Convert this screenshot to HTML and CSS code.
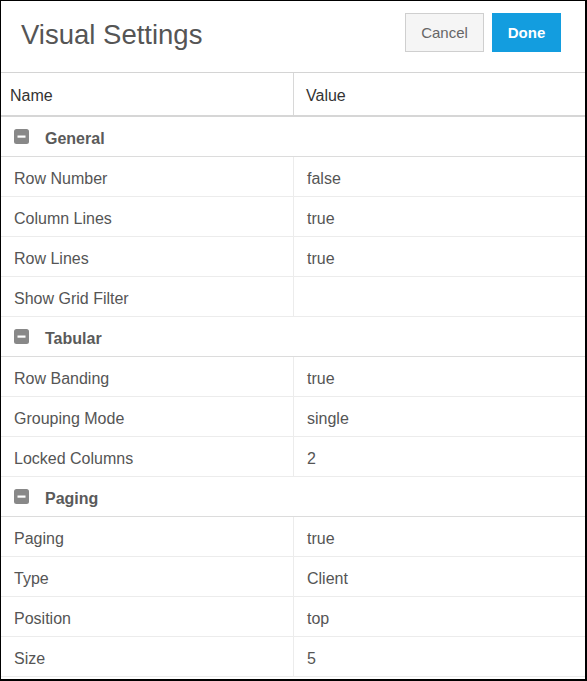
FILE: index.html
```html
<!DOCTYPE html>
<html>
<head>
<meta charset="utf-8">
<link rel="stylesheet" href="styles.css">
</head>
<body>
<div class="window">
  <div class="header">
    <div class="title">Visual Settings</div>
    <div class="actions">
      <button class="btn btn-cancel">Cancel</button>
      <button class="btn btn-done">Done</button>
    </div>
  </div>
  <div class="grid">
    <div class="row head">
      <div class="cell name">Name</div>
      <div class="cell value">Value</div>
    </div>

    <div class="row group">
      <svg class="toggle" width="15" height="15" viewBox="0 0 15 15"><rect x="0" y="0" width="15" height="15" rx="2.5" fill="#888"/><rect x="3.5" y="6.5" width="8" height="2.2" fill="#fff"/></svg>
      <span>General</span>
    </div>
    <div class="row"><div class="cell name">Row Number</div><div class="cell value">false</div></div>
    <div class="row"><div class="cell name">Column Lines</div><div class="cell value">true</div></div>
    <div class="row"><div class="cell name">Row Lines</div><div class="cell value">true</div></div>
    <div class="row"><div class="cell name">Show Grid Filter</div><div class="cell value"></div></div>

    <div class="row group">
      <svg class="toggle" width="15" height="15" viewBox="0 0 15 15"><rect x="0" y="0" width="15" height="15" rx="2.5" fill="#888"/><rect x="3.5" y="6.5" width="8" height="2.2" fill="#fff"/></svg>
      <span>Tabular</span>
    </div>
    <div class="row"><div class="cell name">Row Banding</div><div class="cell value">true</div></div>
    <div class="row"><div class="cell name">Grouping Mode</div><div class="cell value">single</div></div>
    <div class="row"><div class="cell name">Locked Columns</div><div class="cell value">2</div></div>

    <div class="row group">
      <svg class="toggle" width="15" height="15" viewBox="0 0 15 15"><rect x="0" y="0" width="15" height="15" rx="2.5" fill="#888"/><rect x="3.5" y="6.5" width="8" height="2.2" fill="#fff"/></svg>
      <span>Paging</span>
    </div>
    <div class="row"><div class="cell name">Paging</div><div class="cell value">true</div></div>
    <div class="row"><div class="cell name">Type</div><div class="cell value">Client</div></div>
    <div class="row"><div class="cell name">Position</div><div class="cell value">top</div></div>
    <div class="row"><div class="cell name">Size</div><div class="cell value">5</div></div>
  </div>
</div>
</body>
</html>
```
FILE: styles.css
```css
* { box-sizing: border-box; }
html, body { margin: 0; padding: 0; background: #fff; }
body { font-family: "Liberation Sans", Arial, sans-serif; }

.window {
  width: 587px;
  height: 681px;
  border-style: solid;
  border-color: #000;
  border-width: 1px 2px 2px 1px;
  overflow: hidden;
  background: #fff;
}

.header {
  height: 72px;
  border-bottom: 1px solid #d4d4d4;
  display: flex;
  justify-content: space-between;
  align-items: flex-start;
  padding: 12px 24px 0 20px;
}
.title {
  font-size: 27.5px;
  color: #555;
  line-height: 40px;
  padding-top: 2px;
}
.actions { display: flex; gap: 8px; }
.btn {
  height: 39px;
  font-family: "Liberation Sans", Arial, sans-serif;
  font-size: 15px;
  border-radius: 0;
  cursor: pointer;
}
.btn-cancel {
  width: 79px;
  background: #f5f5f5;
  border: 1px solid #cfcfcf;
  color: #666;
}
.btn-done {
  width: 69px;
  background: #139ddf;
  border: 1px solid #139ddf;
  color: #fff;
  font-weight: bold;
}

.grid { font-size: 16px; color: #555; }
.row {
  display: grid;
  grid-template-columns: 293px 1fr;
  height: 40px;
  border-bottom: 1px solid #ececec;
  align-items: stretch;
}
.cell { display: flex; align-items: center; padding-top: 4px; }
.row .name { padding-left: 13px; border-right: 1px solid #ececec; }
.row .value { padding-left: 13px; }

.row.head {
  height: 44px;
  border-bottom: 2px solid #d6d6d6;
  color: #333;
}
.row.head .name { padding-left: 9px; border-right: 1px solid #d8d8d8; }
.row.head .value { padding-left: 12px; }

.row.group {
  display: flex;
  align-items: center;
  border-bottom: 1px solid #dcdcdc;
  font-weight: bold;
  color: #5a5a5a;
  padding-left: 13px;
  padding-top: 2px;
}
.toggle { margin-right: 16px; flex: none; margin-top: -2px; }
.row.group span { padding-top: 2px; }
```
